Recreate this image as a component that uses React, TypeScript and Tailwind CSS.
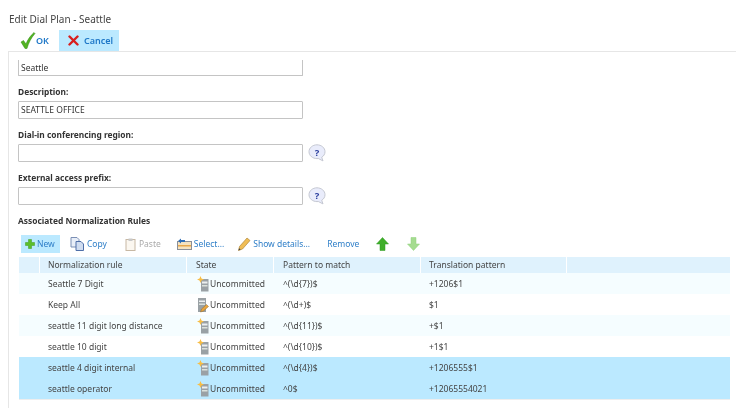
import React from "react";

const rules = [
  { name: "Seattle 7 Digit", pattern: "^(\\d{7})$", translation: "+1206$1", edit: false, row: "bg-[#f5fdff]" },
  { name: "Keep All", pattern: "^(\\d+)$", translation: "$1", edit: true, row: "bg-white" },
  { name: "seattle 11 digit long distance", pattern: "^(\\d{11})$", translation: "+$1", edit: false, row: "bg-[#f5fdff]" },
  { name: "seattle 10 digit", pattern: "^(\\d{10})$", translation: "+1$1", edit: false, row: "bg-white" },
  { name: "seattle 4 digit internal", pattern: "^(\\d{4})$", translation: "+1206555$1", edit: false, row: "bg-[#bbe9ff]" },
  { name: "seattle operator", pattern: "^0$", translation: "+12065554021", edit: false, row: "bg-[#bbe9ff]" },
];

function HelpIcon() {
  return (
    <svg width="18" height="18" viewBox="0 0 18 18" className="ml-[5px] shrink-0">
      <path d="M9 .8c4.400 0 8 3 8 6.900 0 2.400-1.300 4.400-3.300 5.600l1.300 3.600-4.700-2.400c-.4.100-.8.100-1.300.100-4.400 0-8-3-8-6.900S4.600.8 9 .8z" fill="#e9ecfb" stroke="#c5c8d2" />
      <text x="9" y="11.500" textAnchor="middle" fontSize="9.500" fontWeight="700" fill="#2b3f9e">?</text>
    </svg>
  );
}

function ServerIcon({ edit }: { edit: boolean }) {
  if (edit) {
    return (
      <svg width="12" height="16" viewBox="0 0 12 16" className="shrink-0">
        <rect x="1" y="1" width="8" height="14" fill="#9aa1a5" />
        <rect x="2" y="3.500" width="6" height="1.500" fill="#eceff0" />
        <rect x="2" y="6.500" width="6" height="1.500" fill="#dbe1dc" />
        <path d="M3.500 15l1-3 5-4.500 2 2-5 4.500z" fill="#e8a33c" stroke="#8a6a30" strokeWidth="0.5" />
      </svg>
    );
  }
  return (
    <svg width="12" height="16" viewBox="0 0 12 16" className="shrink-0">
      <rect x="4" y="3" width="7.500" height="12.500" fill="#9aa1a5" />
      <rect x="5" y="5.500" width="5.500" height="2" fill="#eceff0" />
      <rect x="5" y="9" width="5.500" height="1.500" fill="#dbe1dc" />
      <path d="M3.500 0l1 2.500L7 3.500l-2.500 1-1 2.500-1-2.500L0 3.500l2.500-1z" fill="#f7bd45" />
    </svg>
  );
}

function Field({ label, value, help }: { label: string; value?: string; help?: boolean }) {
  return (
    <div className="mt-[8px] h-[35px]">
      <div className="h-[15px] text-[8.4px] leading-[15px] font-bold text-[#333]">{label}</div>
      <div className="mt-[2px] flex items-center">
        <div className="h-[18px] w-[285px] rounded-[1px] border border-[#c4c4c4] bg-white px-[2px] text-[8.5px] leading-[16px] text-[#333]">
          {value}
        </div>
        {help && <HelpIcon />}
      </div>
    </div>
  );
}

function ToolButton({ icon, label, active, muted, className }: { icon: React.ReactNode; label: string; active?: boolean; muted?: boolean; className?: string }) {
  return (
    <div className={`flex h-[18px] items-center gap-[2px] ${active ? "bg-[#bbe9ff]" : ""} ${muted ? "text-[#aaa]" : "text-[#2f7fc8]"} ${className ?? ""}`}>
      {icon}
      <span>{label}</span>
    </div>
  );
}

export default function App() {
  return (
    <div className="h-[408px] w-[736px] overflow-hidden bg-white font-['Noto_Sans',sans-serif] blur-[0.4px]">
      <div className="pl-[9px] pt-[12px] text-[10px] leading-[14px] text-[#444]">Edit Dial Plan - Seattle</div>

      {/* OK / Cancel */}
      <div className="mt-[4px] ml-[9px] flex h-[21px] text-[9px] font-semibold text-[#1f78c8]">
        <div className="flex w-[50px] items-center pl-[11px]">
          <svg width="16" height="17" viewBox="0 0 16 17">
            <path d="M1 10l2.500-1.500L6 12c1.500-4 4-8 8-11.500l1 1C11 6 8.500 11 7 16.500H5z" fill="#52b322" stroke="#2e8a12" strokeWidth="0.5" />
          </svg>
          <span>OK</span>
        </div>
        <div className="flex w-[60px] items-center gap-[5px] bg-[#bbe9ff] pl-[9px]">
          <svg width="11" height="11" viewBox="0 0 11 11">
            <path d="M1.500 1.500l8 8M9.500 1.500l-8 8" stroke="#d81e1e" strokeWidth="2.400" strokeLinecap="round" />
          </svg>
          <span>Cancel</span>
        </div>
      </div>

      <div className="ml-[8px] h-[360px] border-l border-t border-[#e6e6e6] pl-[9px]">
        <div className="mt-[8px] h-[16px] w-[285px] rounded-b-[1px] border-x border-b border-[#c4c4c4] px-[2px] text-[8.5px] leading-[15px] text-[#333]">
          Seattle
        </div>
        <Field label="Description:" value="SEATTLE OFFICE" />
        <Field label="Dial-in conferencing region:" help />
        <Field label="External access prefix:" help />

        <div className="mt-[8px] h-[15px] text-[8.4px] leading-[15px] font-bold text-[#333]">Associated Normalization Rules</div>

        {/* rules toolbar */}
        <div className="mt-[7px] flex h-[18px] items-center text-[8.5px]">
          <ToolButton
            active
            className="ml-[3px] w-[39px] pl-[4px]"
            label="New"
            icon={
              <svg width="10" height="10" viewBox="0 0 10 10">
                <path d="M3.500.5h3v3h3v3h-3v3h-3v-3h-3v-3h3z" fill="#5cbf2a" stroke="#3f9a1c" strokeWidth="0.5" />
              </svg>
            }
          />
          <ToolButton
            className="ml-[10px] gap-[1px]"
            label="Copy"
            icon={
              <svg width="15" height="14" viewBox="0 0 15 14">
                <path d="M1 .5h6l2 2V10H1z" fill="#e8eef8" stroke="#7b8fb5" />
                <path d="M6 4.500h5l2.500 2.500v6.500H6z" fill="#cfdcf0" stroke="#4f6fa8" />
              </svg>
            }
          />
          <ToolButton
            muted
            className="ml-[18px]"
            label="Paste"
            icon={
              <svg width="12" height="13" viewBox="0 0 12 13">
                <rect x="1" y="1.500" width="9" height="11" fill="#fbf7f0" stroke="#c7b8a4" />
                <rect x="3.500" y=".5" width="4" height="2.500" fill="#c9c9c9" />
              </svg>
            }
          />
          <ToolButton
            className="ml-[16px]"
            label="Select..."
            icon={
              <svg width="15" height="12" viewBox="0 0 15 12">
                <rect x=".5" y="3.500" width="14" height="8" fill="#f5e3c0" stroke="#8a8f98" />
                <rect x="1" y="7" width="13" height="1.500" fill="#e8a84a" />
                <path d="M1 3l3-2.500v1.500h4v2H4v1.500z" fill="#2f6fb8" />
              </svg>
            }
          />
          <ToolButton
            className="ml-[14px]"
            label="Show details..."
            icon={
              <svg width="13" height="14" viewBox="0 0 13 14">
                <path d="M.5 13.500l1-4L9 1l3 2.500L4.500 12z" fill="#f0bd55" stroke="#a57a2a" strokeWidth="0.6" />
                <path d="M.5 13.500l.6-2.200 1.600 1.300z" fill="#444" />
              </svg>
            }
          />
          <ToolButton className="ml-[17px]" label="Remove" icon={null} />
          <svg width="13" height="14" viewBox="0 0 13 14" className="ml-[17px]">
            <path d="M6.500.5L12.500 7H9v6.500H4V7H.5z" fill="#3fae2a" stroke="#2f9a20" strokeWidth="0.5" />
          </svg>
          <svg width="13" height="14" viewBox="0 0 13 14" className="ml-[18px]">
            <path d="M6.500 13.500L12.500 7H9V.5H4V7H.5z" fill="#a5dc90" stroke="#8fd078" strokeWidth="0.5" />
          </svg>
        </div>

        {/* rules table */}
        <div className="mt-[4px] ml-[1px] w-[711px] border-b border-[#eeeeee] text-[8.5px] text-[#444]">
          <div className="flex h-[16px] items-center bg-[#dff2fd] leading-[16px]">
            <div className="h-full w-[21px] border-r border-white" />
            <div className="h-full w-[147px] border-r border-white pl-[8px]">Normalization rule</div>
            <div className="h-full w-[87px] border-r border-white pl-[9px]">State</div>
            <div className="h-full w-[147px] border-r border-white pl-[9px]">Pattern to match</div>
            <div className="h-full w-[146px] border-r border-white pl-[8px]">Translation pattern</div>
          </div>
          {rules.map((rule) => (
            <div key={rule.name} className={`flex h-[21px] items-center pt-[1px] ${rule.row}`}>
              <div className="w-[21px]" />
              <div className="w-[147px] pl-[8px]">{rule.name}</div>
              <div className="flex w-[87px] items-center gap-[1px] pl-[10px]">
                <ServerIcon edit={rule.edit} />
                <span>Uncommitted</span>
              </div>
              <div className="w-[147px] pl-[9px]">{rule.pattern}</div>
              <div className="w-[146px] pl-[8px]">{rule.translation}</div>
            </div>
          ))}
        </div>
      </div>
    </div>
  );
}
